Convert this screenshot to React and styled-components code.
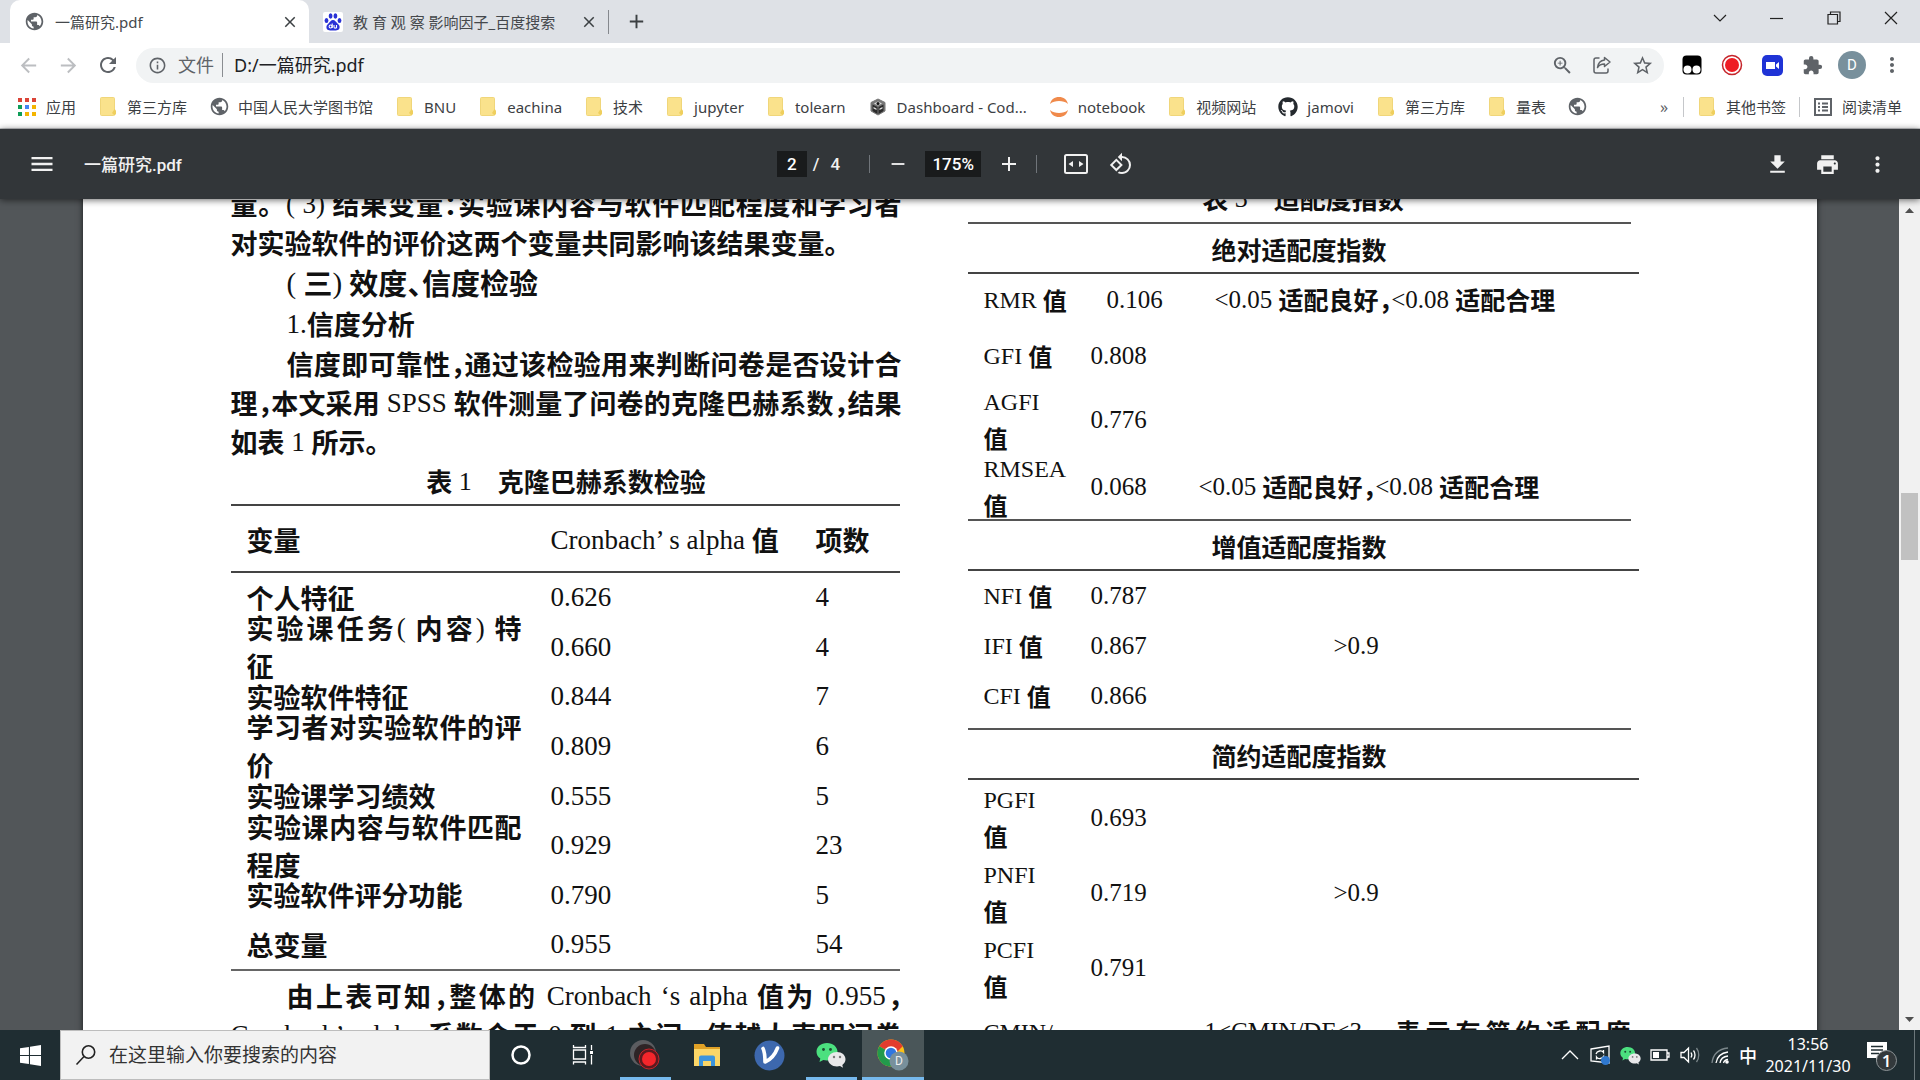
import React from "react";
import styled, { createGlobalStyle, css } from "styled-components";
import {
  MdAdd, MdArrowBack, MdArrowForward, MdClose, MdExtension, MdFileDownload, MdInfoOutline,
  MdMenu, MdMoreVert, MdPrint, MdPublic, MdRefresh, MdRemove, MdRotate90DegreesCcw,
  MdStarBorder, MdZoomIn,
} from "react-icons/md";
import { FaGithub } from "react-icons/fa";

const UI = `"Noto Sans", "Noto Sans CJK SC", sans-serif`;
const PRINT = `"Liberation Serif", "Noto Sans CJK SC", serif`;

const GlobalStyle = createGlobalStyle`
  *, *::before, *::after { box-sizing: border-box; }
  body { margin: 0; font-family: ${UI}; overflow: hidden; }
  button, input { font: inherit; color: inherit; margin: 0; }
  svg { display: block; flex: none; }
`;

const Screen = styled.div`
  height: 100vh;
  display: flex;
  flex-direction: column;
`;

const IconButton = styled.button`
  display: flex;
  align-items: center;
  justify-content: center;
  flex: none;
  width: ${(p) => p.$w || 40}px;
  height: ${(p) => p.$h || 36}px;
  padding: 0;
  border: 0;
  background: none;
  color: ${(p) => p.$color || "#5f6368"};
`;

/* ---------- tab strip ---------- */
const TabStrip = styled.header`
  display: flex;
  height: 43px;
  padding-left: 10px;
  background: #dee1e6;
`;
const Tab = styled.div`
  display: flex;
  align-items: center;
  gap: 10px;
  width: 299px;
  padding: 0 8px 0 14px;
  font-size: 15px;
  line-height: 20px;
  color: #45484c;
  border-radius: 10px 10px 0 0;
  background: ${(p) => (p.$active ? "#fff" : "none")};
  span { flex: 1; white-space: nowrap; }
`;
const TabDivider = styled.i`
  align-self: center;
  width: 1px;
  height: 24px;
  background: #85888d;
`;
const WindowButtons = styled.div`
  display: flex;
  margin-left: auto;
  padding-right: 1px;
`;

/* ---------- navigation ---------- */
const NavRow = styled.nav`
  display: flex;
  align-items: center;
  height: 44px;
  padding: 0 8px;
  background: #fff;
`;
const Omnibox = styled.label`
  display: flex;
  align-items: center;
  flex: 1;
  height: 35px;
  margin: 0 8px;
  padding: 0 2px 0 12px;
  border-radius: 18px;
  background: #f1f3f4;
  font-size: 18px;
  color: #5f6368;
  input {
    flex: 1;
    min-width: 0;
    height: 33px;
    padding: 0 0 2px;
    border: 0;
    outline: 0;
    background: none;
    color: #202124;
  }
`;
const Scheme = styled.span`
  padding: 0 8px 0 11px;
  margin-right: 11px;
  line-height: 24px;
  border-right: 1px solid #8a8d91;
`;
const Avatar = styled.span`
  display: flex;
  align-items: center;
  justify-content: center;
  width: 28px;
  height: 28px;
  border-radius: 50%;
  background: #78909c;
  color: #fff;
  font: 15px Roboto, sans-serif;
`;

/* ---------- bookmarks ---------- */
const BookmarkBar = styled.nav`
  display: flex;
  align-items: center;
  gap: 22px;
  height: 42px;
  padding: 0 18px 2px 17px;
  border-bottom: 1px solid #c9cbce;
  background: #fff;
`;
const Bookmark = styled.a`
  display: flex;
  align-items: center;
  gap: 9px;
  font-size: 15px;
  line-height: 20px;
  color: #3c4043;
  white-space: nowrap;
  text-decoration: none;
`;
const Slot = styled.span`
  display: flex;
  justify-content: center;
  width: 20px;
  color: #5f6368;
`;
const BookmarkEnd = styled.div`
  display: flex;
  align-items: center;
  gap: 13px;
  margin-left: auto;
`;
const BarDivider = styled.i`
  width: 1px;
  height: 20px;
  background: #c5c7ca;
`;

/* ---------- pdf toolbar ---------- */
const PdfBar = styled.div`
  position: relative;
  z-index: 1;
  display: grid;
  grid-template-columns: 1fr auto 1fr;
  align-items: center;
  height: 70px;
  padding: 0 18px 0 22px;
  background: #323639;
  color: #f1f1f1;
  box-shadow: 0 1px 7px rgba(0, 0, 0, 0.6);
  font: 500 17px Roboto, "Noto Sans CJK SC", sans-serif;
`;
const PdfGroup = styled.div`
  display: flex;
  align-items: center;
  justify-content: ${(p) => p.$justify || "flex-start"};
  padding-right: ${(p) => p.$after || 0}px;
  h1 { margin: 0 0 2px 22px; font: inherit; }
`;
const PdfField = styled.input`
  width: ${(p) => p.$w}px;
  height: 26px;
  padding: 0;
  border: 0;
  background: #191b1c;
  color: #fff;
  text-align: center;
`;
const PageTotal = styled.span`
  display: flex;
  gap: 11px;
  padding: 0 29px 0 6px;
`;
const PdfDivider = styled.i`
  width: 1px;
  height: 18px;
  margin-right: ${(p) => p.$after || 0}px;
  background: #70757a;
`;

/* ---------- document ---------- */
const Viewer = styled.main`
  display: flex;
  flex: 1;
  min-height: 0;
  overflow: hidden;
  background: #525659;
`;
const Canvas = styled.div`
  flex: 1;
  display: flex;
  justify-content: center;
  align-items: flex-start;
  overflow: hidden;
`;
const Page = styled.article`
  flex: 0 1 1734px;
  display: grid;
  grid-template-columns: 1fr 1fr;
  align-items: start;
  gap: 66px;
  margin-top: -14px;
  padding: 0 178px 80px 148px;
  background: #fff;
  box-shadow: 0 0 6px rgba(0, 0, 0, 0.7);
  color: #111;
  font-family: ${PRINT};
`;
const Column = styled.section`
  min-width: 0;
  margin-top: -${(p) => p.$raise || 0}px;
  font-size: ${(p) => p.$size}px;
`;
const Han = styled.span`
  font-family: "Noto Sans CJK SC", sans-serif;
  font-weight: 700;
  line-height: 0;
  vertical-align: -2px;
  ${(p) => p.$half && css`font-feature-settings: "halt";`}
`;
const Line = styled.span`
  display: block;
  line-height: ${(p) => p.$lh || 39}px;
  padding-left: ${(p) => (p.$indent ? 56 : 0)}px;
  white-space: nowrap;
  text-align: justify;
  text-align-last: ${(p) => (p.$full ? "justify" : "left")};
`;
const Paragraph = styled.p`
  margin: 0;
`;
const Heading = styled.h2`
  margin: 0;
  padding-left: 56px;
  font-size: ${(p) => p.$size}px;
  font-weight: 400;
  line-height: 41px;
`;
const Caption = styled.h3`
  margin: 0 0 ${(p) => p.$after || 0}px;
  font-size: 26px;
  font-weight: 400;
  line-height: 39px;
  text-align: center;
  white-space: pre;
`;
const Table = styled.table`
  width: 100%;
  table-layout: fixed;
  border-collapse: collapse;
  th, td { padding: 0; text-align: left; font-weight: 400; white-space: nowrap; }
`;
const AlphaTable = styled(Table)`
  width: calc(100% - 2px);
  margin: 3px 0 6px;
  border-top: 2px solid #444;
  border-bottom: 2px solid #666;
  thead { border-bottom: 2px solid #444; }
  thead th { height: 67px; padding-top: 3px; }
  tbody tr { height: 50px; }
  tbody tr:nth-child(3n) { height: 49px; }
  th:first-child { padding-left: 16px; }
`;
const Overhang = styled.div`
  display: flex;
  flex-direction: column;
  justify-content: center;
  height: 48px;
  width: 275px;
`;
const SectionTitle = styled.h4`
  margin: 0;
  height: 51px;
  padding: 5px 8px 0 0;
  border-bottom: 2px solid #444;
  font-size: 25px;
  font-weight: 400;
  line-height: 44px;
  text-align: center;
`;
const ShortRule = styled.hr`
  height: 2px;
  margin: 0 8px -1px 0;
  border: 0;
  background: #555;
`;
const FitTable = styled(Table)`
  margin-bottom: ${(p) => p.$gap || 0}px;
  th { padding-left: 16px; font-size: 24px; }
`;
const FitRow = styled.tr`
  height: ${(p) => p.$h}px;
  ${(p) => p.$shift && css`td { padding-left: 16px; }`}
`;
const Fixed = styled.div`
  display: flex;
  flex-direction: column;
  justify-content: center;
  height: 50px;
`;
const Threshold = styled.span`
  display: block;
  padding-left: 135px;
`;
const UpperNote = styled.div`
  padding: 0 8px 36px 6px;
`;

/* ---------- scrollbar ---------- */
const ScrollTrack = styled.div`
  display: flex;
  flex-direction: column;
  align-items: center;
  width: 21px;
  background: #f1f1f1;
`;
const ScrollSpace = styled.i`
  flex: ${(p) => p.$grow};
`;
const ScrollThumb = styled.i`
  width: 17px;
  flex: 67;
  background: #c1c1c1;
`;

/* ---------- taskbar ---------- */
const Taskbar = styled.footer`
  position: relative;
  z-index: 2;
  display: flex;
  flex: none;
  height: 50px;
  background: #1f2d32;
  color: #fff;
`;
const SearchBox = styled.label`
  display: flex;
  align-items: center;
  gap: 12px;
  width: 430px;
  padding: 0 14px;
  border: 1px solid #bdbdbd;
  background: #f2f2f2;
  color: #222;
  font-size: 19px;
  input {
    flex: 1;
    min-width: 0;
    padding: 0;
    border: 0;
    outline: 0;
    background: none;
  }
  input::placeholder { color: #333; opacity: 1; }
`;
const TaskButton = styled(IconButton).attrs({ $w: 62, $h: 50 })`
  background: ${(p) => (p.$active ? "#4a5659" : "none")};
  box-shadow: ${(p) => (p.$active ? "inset 0 -3px #76b9ed" : "none")};
  ${(p) => p.$running && css`
    background: linear-gradient(#76b9ed, #76b9ed) center bottom / 51px 3px no-repeat;
  `}
`;
const Tray = styled.div`
  display: flex;
  align-items: center;
  margin-left: auto;
  padding-right: 5px;
`;
const ImeButton = styled(IconButton)`
  font: 500 18px "Noto Sans CJK SC", sans-serif;
`;
const Clock = styled.time`
  width: 98px;
  font-size: 16px;
  line-height: 22px;
  text-align: center;
`;
const DesktopEdge = styled.i`
  width: 1px;
  height: 50px;
  margin-left: 7px;
  background: #6c777b;
`;

/* ---------- drawings ---------- */
const Folder = () => (
  <svg width="16" height="19" viewBox="0 0 16 19">
    <rect x="0.5" y="0.5" width="14" height="18" rx="1" fill="#fae28c" stroke="#f0d67a" />
    <path d="M14.500 12l1.500 1.500V17l-1.500 1.500L12 16z" fill="#efcf5e" />
  </svg>
);
const AppsGrid = () => (
  <svg width="18" height="18" viewBox="0 0 18 18">
    {["#db4437", "#db4437", "#db4437", "#0f9d58", "#4285f4", "#f4b400", "#0f9d58", "#f4b400", "#f4b400"].map((c, i) => (
      <rect key={i} x={(i % 3) * 7} y={Math.floor(i / 3) * 7} width="4" height="4" fill={c} />
    ))}
  </svg>
);
const Cube = () => (
  <svg width="16" height="18" viewBox="0 0 16 18">
    <path d="M8 1l7 3.500v8.500l-7 4-7-4V4.500z" fill="#777" stroke="#777" />
    <path d="M4 5.500l4-2 4 2-4 2z" fill="#ddd" />
    <path d="M2.500 6.500L7.500 9v7L2.500 13zM13.500 6.500L8.500 9v7l5-3z" fill="#2b2b2b" />
    <path d="M3.500 9l3 1.500v1.500L3.500 10.500zM12.500 9l-3 1.500v1.500l3-1.500z" fill="#ddd" />
    <circle cx="8" cy="5.500" r="1.500" fill="#111" />
  </svg>
);
const JupyterMark = () => (
  <svg width="20" height="20" viewBox="0 0 20 20" fill="#f08a4b">
    <path d="M1 7C2 2.500 5.500 0 10 0S18 2.500 19 7C16.500 4.800 13.500 4 10 4S3.500 4.800 1 7z" />
    <path d="M1 13c1 4.500 4.500 7 9 7s8-2.500 9-7c-2.500 2.200-5.500 3-9 3S3.500 15.200 1 13z" />
  </svg>
);
const ReadingList = () => (
  <svg width="18" height="18" viewBox="0 0 18 18" fill="none" stroke="#5f6368" strokeWidth="2">
    <path d="M1 1h16v16H1zM4 5.500h2M8 5.500h6M4 9h2M8 9h6M4 12.500h2M8 12.500h6" />
  </svg>
);
const Paw = () => (
  <svg width="20" height="20" viewBox="0 0 20 20" fill="#2a32d6">
    <rect width="20" height="20" rx="2" fill="#fff" />
    <ellipse cx="3.500" cy="8.500" rx="1.900" ry="2.500" />
    <ellipse cx="7.600" cy="4" rx="1.900" ry="2.700" />
    <ellipse cx="12.400" cy="4" rx="1.900" ry="2.700" />
    <ellipse cx="16.500" cy="8.500" rx="1.900" ry="2.500" />
    <path d="M10 8c2 0 3 2 4.500 3.500S17 14 16.500 16s-2 2.500-6.500 2.500S4 18 3.500 16 4 13 5.500 11.500 8 8 10 8z" />
    <g fill="none" stroke="#fff" strokeWidth="1.100">
      <circle cx="7.600" cy="14.500" r="1.500" />
      <path d="M9.200 11.500v4.600M11 13v2c0 1.500 2.500 1.500 2.500 0v-2 3.200" />
    </g>
  </svg>
);
const ShareIcon = () => (
  <svg width="20" height="20" viewBox="0 0 20 20" fill="none" stroke="#5f6368" strokeWidth="1.500">
    <path d="M7.500 3H4a2 2 0 0 0-2 2v11a2 2 0 0 0 2 2h10a2 2 0 0 0 2-2v-2.500" />
    <path d="M12.500 2.500L18 7l-5.500 4.500V9C9 9 7 10 5.500 12.500 6 8.500 8.500 5.500 12.500 5z" strokeLinejoin="round" />
  </svg>
);
const Monkey = () => (
  <svg width="20" height="20" viewBox="0 0 20 20">
    <rect x="0.5" y="0.5" width="19" height="19" rx="4" />
    <circle cx="5.500" cy="14.500" r="4" fill="#fff" />
    <circle cx="14.500" cy="14.500" r="4" fill="#fff" />
  </svg>
);
const RedDot = () => (
  <svg width="22" height="22" viewBox="0 0 22 22">
    <circle cx="11" cy="11" r="9.500" fill="#fff" stroke="#c5242a" strokeWidth="1.500" />
    <circle cx="11" cy="11" r="7" fill="#ee1c24" />
  </svg>
);
const Camera = () => (
  <svg width="21" height="21" viewBox="0 0 21 21">
    <rect width="21" height="21" rx="5" fill="#1f33d6" />
    <path d="M4 7h9v7H4zM14 9.500L17 7v7l-3-2.500z" fill="#fff" />
  </svg>
);
const FitPage = () => (
  <svg width="26" height="24" viewBox="0 0 26 24" fill="currentColor">
    <rect x="2" y="3" width="22" height="18" rx="1.500" fill="none" stroke="currentColor" strokeWidth="2" />
    <path d="M10 9v6l-4.500-3zM16 9v6l4.500-3z" />
  </svg>
);
const Caret = ({ up }) => (
  <svg width="9" height="22" viewBox="0 0 9 22" fill="#505050">
    <path d={up ? "M0 14l4.500-5L9 14z" : "M0 9l4.500 5L9 9z"} />
  </svg>
);
const WindowIcon = ({ d }) => (
  <svg width="16" height="16" viewBox="0 0 16 16" fill="none" stroke="#222" strokeWidth="1.200"><path d={d} /></svg>
);
const WinLogo = () => (
  <svg width="21" height="21" viewBox="0 0 20 20" fill="#fff">
    <path d="M0 3l8.500-1.200v7.700H0zM9.500 1.600L20 0v9.500H9.500zM0 10.500h8.500v7.700L0 17zM9.500 10.500H20V20L9.500 18.400z" />
  </svg>
);
const Magnifier = () => (
  <svg width="22" height="22" viewBox="0 0 22 22" fill="none" stroke="#222" strokeWidth="1.600">
    <circle cx="13.500" cy="8" r="6.200" /><path d="M9 12.500L1.500 20.500" />
  </svg>
);
const Cortana = () => (
  <svg width="22" height="22" viewBox="0 0 22 22"><circle cx="11" cy="11" r="8.500" fill="none" stroke="#fff" strokeWidth="2.500" /></svg>
);
const TaskView = () => (
  <svg width="22" height="22" viewBox="0 0 22 22" fill="none" stroke="#fff" strokeWidth="1.300">
    <path d="M1.500 6h12v9h-12zM1.500 1v2.500h12V1M1.500 20.500V18h12v2.500M19.500 1v5M19.500 11v9.500" />
    <path d="M18 7h3v3h-3z" fill="#fff" stroke="none" />
  </svg>
);
const Recorder = () => (
  <svg width="32" height="32" viewBox="0 0 32 32">
    <circle cx="14" cy="14" r="13" fill="#5b5c60" />
    <circle cx="16" cy="16" r="11" fill="#2e2426" />
    <circle cx="20" cy="20" r="10" fill="#5c1a1f" stroke="#c4242a" strokeWidth="1" />
    <circle cx="20" cy="20" r="7" fill="#f3262b" />
  </svg>
);
const Explorer = () => (
  <svg width="28" height="24" viewBox="0 0 28 24">
    <path d="M1 1h10l2 3h14v5H1z" fill="#e0a126" />
    <path d="M1 6h26v17H1z" fill="#fbd667" />
    <path d="M6 23v-8.500a2 2 0 0 1 2-2h12a2 2 0 0 1 2 2V23h-4v-5h-8v5z" fill="#3c94dc" />
  </svg>
);
const VNote = () => (
  <svg width="31" height="31" viewBox="0 0 31 31">
    <circle cx="15.500" cy="15.500" r="15" fill="#3d68ae" />
    <path d="M9 8.500c2 4 2 8 2 13.500C17 19.500 21 14.500 23.500 8" fill="none" stroke="#fff" strokeWidth="3.600" strokeLinejoin="round" strokeLinecap="round" />
  </svg>
);
const WeChat = ({ size }) => (
  <svg width={size} height={size} viewBox="0 0 30 30">
    <path d="M11 3C5 3 0.500 6.800 0.500 11.800c0 2.900 1.500 5.200 3.800 6.800L3.500 22l3.800-2c1.200.300 2.400.500 3.700.500 6 0 10.500-3.900 10.500-8.700S17 3 11 3z" fill="#4be07f" />
    <circle cx="7.500" cy="9.500" r="1.400" fill="#1d4a32" /><circle cx="14.500" cy="9.500" r="1.400" fill="#1d4a32" />
    <path d="M21 12c-5 0-9 3.200-9 7.200s4 7.200 9 7.200c1 0 2-.100 3-.400l3 1.800-.700-2.900c1.900-1.400 3.200-3.400 3.200-5.700 0-4-3.500-7.200-8.500-7.200z" fill="#e8e8ea" />
    <circle cx="18" cy="17" r="1.200" fill="#777" /><circle cx="24" cy="17" r="1.200" fill="#777" />
  </svg>
);
const ChromeMark = () => (
  <svg width="34" height="34" viewBox="0 0 34 34">
    <circle cx="15" cy="15" r="13.500" fill="#fbc116" />
    <path d="M15 15L3.300 8.200A13.500 13.500 0 0 1 26.700 8.200z" fill="#e33b2e" />
    <path d="M3.300 8.200A13.500 13.500 0 0 0 15 28.500l6-10-6-3.500z" fill="#229a4b" />
    <path d="M15 8.200h11.700L20 15z" fill="#e33b2e" />
    <circle cx="15" cy="15" r="6.800" fill="#fff" /><circle cx="15" cy="15" r="5.300" fill="#3076e0" />
    <circle cx="23" cy="23" r="9.500" fill="#78909c" />
    <text x="23" y="27" textAnchor="middle" fontSize="12" fill="#eee" fontFamily="Roboto, sans-serif">D</text>
  </svg>
);
const TrayIcon = ({ children, w = 20 }) => (
  <svg width={w} height="20" viewBox={`0 0 ${w} 20`} fill="none" stroke="#fff" strokeWidth="1.300">{children}</svg>
);

/* Splits a string so that ideographs get their heavier face and stops take half a square. */
function Mixed({ children }) {
  const runs = children.match(/[\u3400-\u9fff。]+|[，、：]|[^\u3400-\u9fff。，、：]+/g) || [];
  return runs.map((run, i) => {
    if (/^[，、：]$/.test(run)) return <Han key={i} $half>{run}</Han>;
    if (/[\u3400-\u9fff。]/.test(run)) return <Han key={i}>{run}</Han>;
    return <React.Fragment key={i}>{run}</React.Fragment>;
  });
}

const bookmarks = [
  ["应用", <AppsGrid />], ["第三方库", <Folder />], ["中国人民大学图书馆", <MdPublic size={21} />],
  ["BNU", <Folder />], ["eachina", <Folder />], ["技术", <Folder />], ["jupyter", <Folder />],
  ["tolearn", <Folder />], ["Dashboard - Cod...", <Cube />], ["notebook", <JupyterMark />],
  ["视频网站", <Folder />], ["jamovi", <FaGithub size={20} color="#24292e" />],
  ["第三方库", <Folder />], ["量表", <Folder />], ["", <MdPublic size={21} />],
];

const alphaRows = [
  [["个人特征"], "0.626", "4"],
  [["实验课任务( 内容) 特", "征"], "0.660", "4"],
  [["实验软件特征"], "0.844", "7"],
  [["学习者对实验软件的评", "价"], "0.809", "6"],
  [["实验课学习绩效"], "0.555", "5"],
  [["实验课内容与软件匹配", "程度"], "0.929", "23"],
  [["实验软件评分功能"], "0.790", "5"],
  [["总变量"], "0.955", "54"],
];

const Lines = ({ lines, justify, pitch = 38 }) =>
  lines.map((text, i) => (
    <Line key={i} $lh={pitch} $full={justify && i < lines.length - 1}><Mixed>{text}</Mixed></Line>
  ));

const Mark = ({ text, icon }) => (
  <Bookmark href="#" aria-label={text || "书签"}><Slot>{icon}</Slot>{text}</Bookmark>
);

function FitSection({ title, rows, gap, threshold }) {
  return (
    <>
      <ShortRule />
      <SectionTitle><Mixed>{title}</Mixed></SectionTitle>
      <FitTable $gap={gap}>
        <colgroup><col width="123" /><col width="108" /><col /></colgroup>
        <tbody>
          {rows.map(([label, value, note, h, shift], i) => (
            <FitRow key={i} $h={h} $shift={shift}>
              <th scope="row"><Fixed><Lines lines={label} pitch={36} /></Fixed></th>
              <td>{value}</td>
              {!threshold && <td>{note && <Mixed>{note}</Mixed>}</td>}
              {threshold && i === 0 && <td rowSpan={3}><Threshold>{threshold}</Threshold></td>}
              {threshold && i > 2 && (
                <td><UpperNote><Line $lh={36} $full><Mixed>{note}</Mixed></Line></UpperNote></td>
              )}
            </FitRow>
          ))}
        </tbody>
      </FitTable>
    </>
  );
}

export default function App() {
  return (
    <Screen>
      <GlobalStyle />
      <TabStrip>
        <Tab $active>
          <MdPublic size={21} color="#5f6368" />
          <span>一篇研究.pdf</span>
          <IconButton $w={22} $color="#3c4043" aria-label="关闭"><MdClose size={18} /></IconButton>
        </Tab>
        <Tab>
          <Paw />
          <span>教 育 观 察 影响因子_百度搜索</span>
          <IconButton $w={22} $color="#3c4043" aria-label="关闭"><MdClose size={18} /></IconButton>
        </Tab>
        <TabDivider />
        <IconButton $w={54} $h={43} $color="#3c4043" aria-label="新标签页"><MdAdd size={23} /></IconButton>
        <WindowButtons>
          <IconButton $w={57} aria-label="搜索标签页"><WindowIcon d="M2 5l6 6 6-6" /></IconButton>
          <IconButton $w={57} aria-label="最小化"><WindowIcon d="M1 8.500h13" /></IconButton>
          <IconButton $w={57} aria-label="还原"><WindowIcon d="M2 4.500h9.500V14H2zM4.500 4.500V2H14v9.500h-2.500" /></IconButton>
          <IconButton $w={57} aria-label="关闭窗口"><WindowIcon d="M2 2l12 12M14 2L2 14" /></IconButton>
        </WindowButtons>
      </TabStrip>

      <NavRow>
        <IconButton $color="#bcbec1" aria-label="后退"><MdArrowBack size={23} /></IconButton>
        <IconButton $color="#bcbec1" aria-label="前进"><MdArrowForward size={23} /></IconButton>
        <IconButton aria-label="重新加载"><MdRefresh size={24} /></IconButton>
        <Omnibox>
          <MdInfoOutline size={19} />
          <Scheme>文件</Scheme>
          <input aria-label="地址" defaultValue="D:/一篇研究.pdf" />
          <IconButton aria-label="缩放"><MdZoomIn size={23} /></IconButton>
          <IconButton aria-label="分享"><ShareIcon /></IconButton>
          <IconButton aria-label="收藏"><MdStarBorder size={23} /></IconButton>
        </Omnibox>
        <IconButton aria-label="脚本管理"><Monkey /></IconButton>
        <IconButton aria-label="录制"><RedDot /></IconButton>
        <IconButton aria-label="录像"><Camera /></IconButton>
        <IconButton aria-label="扩展程序"><MdExtension size={21} /></IconButton>
        <IconButton aria-label="用户"><Avatar>D</Avatar></IconButton>
        <IconButton aria-label="菜单"><MdMoreVert size={24} /></IconButton>
      </NavRow>

      <BookmarkBar>
        {bookmarks.map(([text, icon], i) => <Mark key={i} text={text} icon={icon} />)}
        <BookmarkEnd>
          <IconButton $w={12} aria-label="更多书签">»</IconButton>
          <BarDivider />
          <Mark text="其他书签" icon={<Folder />} />
          <BarDivider />
          <Mark text="阅读清单" icon={<ReadingList />} />
        </BookmarkEnd>
      </BookmarkBar>

      <PdfBar>
        <PdfGroup>
          <IconButton $color="#f1f1f1" aria-label="目录"><MdMenu size={28} /></IconButton>
          <h1>一篇研究.pdf</h1>
        </PdfGroup>
        <PdfGroup $after={14}>
          <PdfField $w={30} aria-label="页码" defaultValue="2" />
          <PageTotal><span>/</span><span>4</span></PageTotal>
          <PdfDivider />
          <IconButton $w={55} $color="#f1f1f1" aria-label="缩小"><MdRemove size={22} /></IconButton>
          <PdfField $w={56} aria-label="缩放比例" defaultValue="175%" />
          <IconButton $w={55} $color="#f1f1f1" aria-label="放大"><MdAdd size={24} /></IconButton>
          <PdfDivider $after={6} />
          <IconButton $w={66} $color="#f1f1f1" aria-label="适合页面"><FitPage /></IconButton>
          <IconButton $w={24} $color="#f1f1f1" aria-label="逆时针旋转"><MdRotate90DegreesCcw size={24} /></IconButton>
        </PdfGroup>
        <PdfGroup $justify="flex-end">
          <IconButton $w={50} $color="#f1f1f1" aria-label="下载"><MdFileDownload size={25} /></IconButton>
          <IconButton $w={50} $color="#f1f1f1" aria-label="打印"><MdPrint size={25} /></IconButton>
          <IconButton $w={50} $color="#f1f1f1" aria-label="更多"><MdMoreVert size={25} /></IconButton>
        </PdfGroup>
      </PdfBar>

      <Viewer>
        <Canvas>
          <Page>
            <Column $size={27}>
              <Paragraph>
                <Line $full><Mixed>量。( 3) 结果变量：实验课内容与软件匹配程度和学习者</Mixed></Line>
                <Line><Mixed>对实验软件的评价这两个变量共同影响该结果变量。</Mixed></Line>
              </Paragraph>
              <Heading $size={29}><Mixed>( 三) 效度、信度检验</Mixed></Heading>
              <Heading $size={27}><Mixed>1.信度分析</Mixed></Heading>
              <Paragraph>
                <Line $indent $full><Mixed>信度即可靠性，通过该检验用来判断问卷是否设计合</Mixed></Line>
                <Line $full><Mixed>理，本文采用 SPSS 软件测量了问卷的克隆巴赫系数，结果</Mixed></Line>
                <Line><Mixed>如表 1 所示。</Mixed></Line>
              </Paragraph>
              <Caption><Mixed>{"表 1\u3000克隆巴赫系数检验"}</Mixed></Caption>
              <AlphaTable>
                <colgroup><col width="320" /><col width="265" /><col /></colgroup>
                <thead>
                  <tr>
                    <th scope="col"><Mixed>变量</Mixed></th>
                    <th scope="col"><Mixed>Cronbach’ s alpha 值</Mixed></th>
                    <th scope="col"><Mixed>项数</Mixed></th>
                  </tr>
                </thead>
                <tbody>
                  {alphaRows.map(([label, alpha, count]) => (
                    <tr key={label[0]}>
                      <th scope="row"><Overhang><Lines lines={label} justify /></Overhang></th>
                      <td>{alpha}</td>
                      <td>{count}</td>
                    </tr>
                  ))}
                </tbody>
              </AlphaTable>
              <Paragraph>
                <Line $indent $full><Mixed>由上表可知，整体的 Cronbach ‘s alpha 值为 0.955，</Mixed></Line>
                <Line $full><Mixed>Cronbach’s alpha 系数介于 0 到 1 之间， 值越大表明问卷</Mixed></Line>
              </Paragraph>
            </Column>

            <Column $size={25} $raise={6}>
              <Caption $after={4}><Mixed>{"表 3\u3000适配度指数"}</Mixed></Caption>
              <FitSection
                title="绝对适配度指数"
                rows={[
                  [["RMR 值"], "0.106", "<0.05 适配良好，<0.08 适配合理", 52, true],
                  [["GFI 值"], "0.808", "", 59],
                  [["AGFI", "值"], "0.776", "", 70],
                  [["RMSEA", "值"], "0.068", "<0.05 适配良好，<0.08 适配合理", 64],
                ]}
              />
              <FitSection
                title="增值适配度指数"
                threshold=">0.9"
                gap={7}
                rows={[
                  [["NFI 值"], "0.787", "", 50],
                  [["IFI 值"], "0.867", "", 50],
                  [["CFI 值"], "0.866", "", 50],
                ]}
              />
              <FitSection
                title="简约适配度指数"
                threshold=">0.9"
                rows={[
                  [["PGFI", "值"], "0.693", "", 75],
                  [["PNFI", "值"], "0.719", "", 75],
                  [["PCFI", "值"], "0.791", "", 75],
                  [["CMIN/", "DF 值"], "", "1<CMIN/DF<3， 表示有简约适配度", 90],
                ]}
              />
            </Column>
          </Page>
        </Canvas>
        <ScrollTrack>
          <Caret up />
          <ScrollSpace $grow={272} />
          <ScrollThumb />
          <ScrollSpace $grow={448} />
          <Caret />
        </ScrollTrack>
      </Viewer>

      <Taskbar>
        <IconButton $w={60} $h={50} aria-label="开始"><WinLogo /></IconButton>
        <SearchBox>
          <Magnifier />
          <input aria-label="搜索" placeholder="在这里输入你要搜索的内容" />
        </SearchBox>
        <TaskButton aria-label="Cortana"><Cortana /></TaskButton>
        <TaskButton aria-label="任务视图"><TaskView /></TaskButton>
        <TaskButton $running aria-label="录屏"><Recorder /></TaskButton>
        <TaskButton aria-label="文件资源管理器"><Explorer /></TaskButton>
        <TaskButton aria-label="笔记"><VNote /></TaskButton>
        <TaskButton $running aria-label="微信"><WeChat size={30} /></TaskButton>
        <TaskButton $active aria-label="Chrome"><ChromeMark /></TaskButton>
        <Tray>
          <IconButton $w={30} aria-label="显示隐藏的图标"><TrayIcon><path d="M2 14l8-8 8 8" /></TrayIcon></IconButton>
          <IconButton $w={30} aria-label="同步">
            <TrayIcon>
              <path d="M1 4l18-3v17L1 16zM6 9c1-3.500 6-4 7.500-1.500V5M14 10.500c-1 3.500-6 4-7.500 1.500v2.500" />
              <circle cx="15.500" cy="15.500" r="4.500" fill="#2f78cf" stroke="none" />
            </TrayIcon>
          </IconButton>
          <IconButton $w={30} aria-label="微信消息"><WeChat size={21} /></IconButton>
          <IconButton $w={30} aria-label="电池">
            <TrayIcon><path d="M1 5h16v10H1zM17 8h2v4h-2" /><path d="M3 7h6v6H3z" fill="#fff" stroke="none" /></TrayIcon>
          </IconButton>
          <IconButton $w={30} aria-label="音量">
            <TrayIcon>
              <path d="M1 7.500h3l4.500-4.500v14L4 12.500H1zM11 7.500c1 1.500 1 3.500 0 5M13.500 5.500c2 2.500 2 6.500 0 9" />
              <path d="M16.500 3c3 4 3 10 0 14" stroke="#7b868a" />
            </TrayIcon>
          </IconButton>
          <IconButton $w={32} aria-label="网络">
            <TrayIcon>
              <path d="M1 18C2 9 8 4 17 3" stroke="#7b868a" />
              <path d="M5 18c1-6.500 5-10 12-11M9 18c.500-4 3.500-6.500 8-7M12.500 18c.500-2 2-3.300 4.500-3.500" />
              <circle cx="16" cy="17" r="1.800" fill="#fff" stroke="none" />
            </TrayIcon>
          </IconButton>
          <ImeButton $w={22} $color="#fff" aria-label="输入法">中</ImeButton>
          <Clock>13:56<br />2021/11/30</Clock>
          <IconButton $w={50} $h={50} aria-label="通知">
            <svg width="32" height="32" viewBox="0 0 32 32">
              <path d="M1 3h20v16h-7l-4 4v-4H1z" fill="#fff" />
              <path d="M5 7.500h12M5 11h12M5 14.500h8" stroke="#1f2d32" strokeWidth="1.300" />
              <circle cx="20.500" cy="21.500" r="10" fill="#33393c" stroke="#8d9497" />
              <text x="20.500" y="27.500" textAnchor="middle" fontSize="17" fontWeight="600" fill="#fff" fontFamily="Open Sans, sans-serif">1</text>
            </svg>
          </IconButton>
          <DesktopEdge />
        </Tray>
      </Taskbar>
    </Screen>
  );
}
